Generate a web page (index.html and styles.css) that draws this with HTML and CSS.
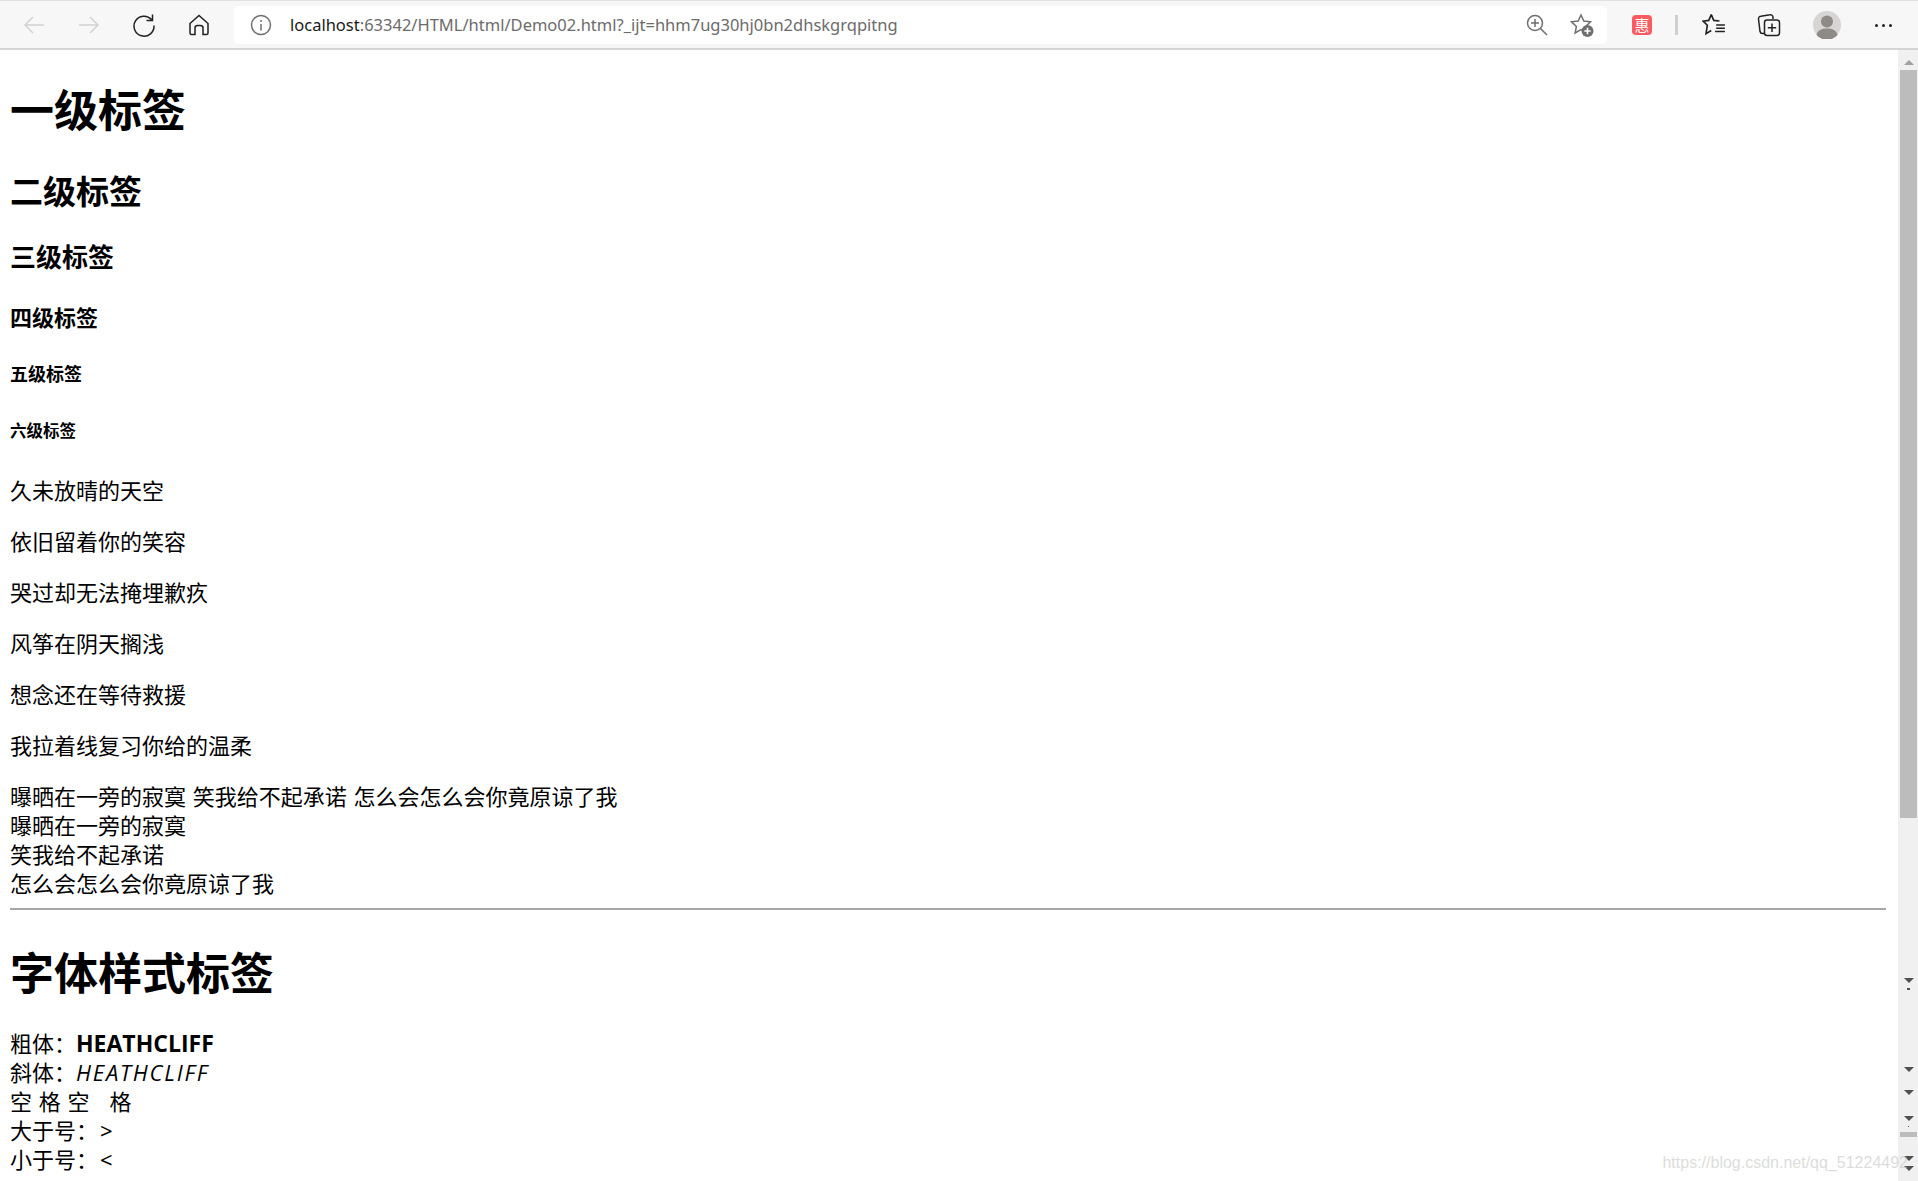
FILE: index.html
```html
<!DOCTYPE html>
<html lang="zh">
<head>
    <meta charset="UTF-8">
    <meta name="viewport" content="width=device-width, initial-scale=1.0">
    <title>Demo02</title>
    <link rel="stylesheet" href="styles.css">
</head>
<body>
    <header class="toolbar">
        <div class="nav-buttons">
            <button class="tool-btn"><svg width="24" height="24" viewBox="0 0 24 24" class="stroke-faint"><path d="M22 12H3M11 4l-8 8 8 8"/></svg></button>
            <button class="tool-btn"><svg width="24" height="24" viewBox="0 0 24 24" class="stroke-faint"><path d="M2 12h19M13 4l8 8-8 8"/></svg></button>
            <button class="tool-btn"><svg width="24" height="24" viewBox="0 0 24 24" class="stroke-dark"><path d="M19.500 6.500A10 10 0 1 0 22 12.500M20.500 1.500v6h-6"/></svg></button>
            <button class="tool-btn"><svg width="24" height="24" viewBox="0 0 24 24" class="stroke-dark"><path d="M3 10.500 12 2.500l9 8V20a1.500 1.500 0 0 1-1.500 1.500H16V15a2.500 2.500 0 0 0-2.500-2.500h-3A2.500 2.500 0 0 0 8 15v6.500H4.500A1.500 1.500 0 0 1 3 20z"/></svg></button>
        </div>
        <div class="address-bar">
            <svg width="22" height="22" viewBox="0 0 22 22" class="stroke-grey info-icon"><circle cx="11" cy="11" r="9.500"/><path d="M11 10v6.500M11 6v2"/></svg>
            <div class="url"><span class="url-host">localhost</span>:63342/HTML/html/Demo02.html?_ijt=hhm7ug30hj0bn2dhskgrqpitng</div>
            <svg width="24" height="24" viewBox="0 0 24 24" class="stroke-grey zoom-icon"><circle cx="10" cy="10" r="7.500"/><path d="M15.500 15.500 22 22M10 6v8M6 10h8"/></svg>
            <svg width="24" height="24" viewBox="0 0 24 24" class="fav-add-icon"><path class="stroke-grey" d="M11 2l2.800 6 6.700.8-4.900 4.600 1.300 6.500L11 16.700 5.100 20l1.300-6.600L1.500 8.800 8.200 8z"/><circle cx="17.500" cy="18" r="6" fill="#6f6f6f"/><path d="M17.500 14.800v6.400M14.300 18h6.400" stroke="#fff" stroke-width="1.600"/></svg>
        </div>
        <div class="ext-badge">惠</div>
        <div class="separator"></div>
        <button class="tool-btn fav-list"><svg width="24" height="24" viewBox="0 0 22 22" class="stroke-dark"><path d="M8.500 1.500l2.300 5.300 5.200.5M8.500 1.500 6.200 6.800 1 7.500l3.900 3.700L3.700 19l4.800-3M13 11h8M13 14h8M12 17h9"/></svg></button>
        <button class="tool-btn"><svg width="24" height="24" viewBox="0 0 24 24" class="stroke-dark"><path d="M7 20.500H5.500A2.500 2.500 0 0 1 3 18.500L1.500 6A2.500 2.500 0 0 1 3.800 3.200L13 1.800A2.500 2.500 0 0 1 16 4v2"/><rect x="7.500" y="7" width="15" height="15.500" rx="2.500"/><path d="M15 10.500v8.500M10.800 14.700h8.400"/></svg></button>
        <div class="avatar">
            <svg width="28" height="28" viewBox="0 0 28 28"><circle cx="14" cy="14" r="14" fill="#d6d5d3"/><circle cx="14" cy="10.500" r="6" fill="#8e8a86"/><path d="M3.500 24c1-5 5.500-6.500 10.500-6.500s9.500 1.500 10.500 6.500a14 14 0 0 1-21 0z" fill="#8e8a86"/></svg>
        </div>
        <div class="more-dots"><span></span><span></span><span></span></div>
    </header>

    <div class="viewport">
        <main class="page">
            <h1>一级标签</h1>
            <h2>二级标签</h2>
            <h3>三级标签</h3>
            <h4>四级标签</h4>
            <h5>五级标签</h5>
            <h6>六级标签</h6>
            <p>久未放晴的天空</p>
            <p>依旧留着你的笑容</p>
            <p>哭过却无法掩埋歉疚</p>
            <p>风筝在阴天搁浅</p>
            <p>想念还在等待救援</p>
            <p>我拉着线复习你给的温柔</p>
            <p class="lyric">曝晒在一旁的寂寞 笑我给不起承诺 怎么会怎么会你竟原谅了我<br>曝晒在一旁的寂寞<br>笑我给不起承诺<br>怎么会怎么会你竟原谅了我</p>
            <hr>
            <h1 class="second-title">字体样式标签</h1>
            <p class="samples">粗体：<strong>HEATHCLIFF</strong><br>斜体：<em>HEATHCLIFF</em><br>空 格 空&nbsp;&nbsp;&nbsp;格<br>大于号：<span class="sym">&gt;</span><br>小于号：<span class="sym">&lt;</span></p>
        </main>

        <!-- screenshot shows a stack of scroll arrows from nested frames -->
        <aside class="scrollbar">
            <div class="arrow-up"></div>
            <div class="thumb"></div>
            <div class="arrow-down arrow-a"></div>
            <div class="speck speck-wide"></div>
            <div class="arrow-down arrow-b"></div>
            <div class="arrow-down arrow-c"></div>
            <div class="arrow-down arrow-d"></div>
            <div class="speck"></div>
            <div class="thumb-small"></div>
            <div class="arrow-down arrow-e"></div>
            <div class="arrow-down arrow-f"></div>
        </aside>
        <div class="watermark">https://blog.csdn.net/qq_51224492</div>
    </div>
</body>
</html>
```

FILE: styles.css
```css
html, body {
    height: 100%;
}
body {
    margin: 0;
    display: flex;
    flex-direction: column;
    overflow: hidden;
    background-color: #fff;
    color: #000;
    font-family: 'Noto Sans', 'Noto Sans CJK SC', sans-serif;
}

/* browser toolbar */
.toolbar {
    flex: none;
    box-sizing: border-box;
    height: 50px;
    display: flex;
    align-items: center;
    padding-top: 1px;
    background-color: #f7f7f7;
    border-top: 1px solid #e2e2e2;
    border-bottom: 2px solid #d4d4d4;
}
.nav-buttons {
    display: flex;
    margin-left: 6px;
}
.tool-btn {
    width: 55px;
    height: 40px;
    padding: 0;
    border: none;
    background: none;
    display: flex;
    align-items: center;
    justify-content: center;
}
.stroke-faint, .stroke-dark, .stroke-grey {
    fill: none;
    stroke-width: 1.500;
}
.stroke-faint { stroke: #d2d2d2; }
.stroke-dark { stroke: #222; }
.stroke-grey {
    fill: none;
    stroke: #6f6f6f;
    stroke-width: 1.500;
}
.address-bar {
    flex: none;
    width: 1373px;
    height: 38px;
    margin-left: 8px;
    display: flex;
    align-items: center;
    background-color: #fff;
    border-radius: 5px;
}
.info-icon {
    margin-left: 16px;
}
.url {
    margin-left: 18px;
    padding-bottom: 2px;
    flex: 1;
    font-size: 16.500px;
    color: #6b6b6b;
    white-space: nowrap;
}
.url-host {
    color: #1a1a1a;
}
.zoom-icon {
    margin-right: 21px;
}
.fav-add-icon {
    margin-right: 13px;
}
.ext-badge {
    width: 20px;
    height: 20px;
    margin-left: 25px;
    border-radius: 4px;
    background-color: #fb5a61;
    color: #fff;
    font-size: 15px;
    line-height: 20px;
    text-align: center;
}
.separator {
    width: 3px;
    height: 20px;
    margin-left: 23px;
    background-color: #cfcfcf;
}
.fav-list {
    margin-left: 8px;
}
.avatar {
    width: 28px;
    height: 28px;
    margin-left: 17px;
}
.more-dots {
    display: flex;
    gap: 4px;
    margin-left: 34px;
}
.more-dots span {
    width: 3px;
    height: 3px;
    border-radius: 50%;
    background-color: #222;
}

/* page content */
.viewport {
    flex: 1;
    min-height: 0;
    display: flex;
    position: relative;
}
.page {
    flex: 1;
    min-width: 0;
    padding: 0 12px 0 10px;
    overflow: hidden;
}
h1 {
    font-size: 44px;
    line-height: 58px;
    margin: 31px 0;
}
h2 {
    font-size: 33px;
    line-height: 44px;
    margin: 27px 0 26px;
}
h3 {
    font-size: 26px;
    line-height: 34px;
    margin: 25px 0;
}
h4 {
    font-size: 22px;
    line-height: 29px;
    margin: 29px 0;
}
h5 {
    font-size: 18px;
    line-height: 24px;
    margin: 30px 0;
}
h6 {
    font-size: 16.500px;
    line-height: 22px;
    margin: 34px 0;
}
p {
    font-size: 22px;
    line-height: 29px;
    margin: 22px 0;
    word-spacing: 1px;
}
.lyric {
    margin-bottom: 10px;
}
hr {
    margin: 10px 0;
    border: none;
    border-top: 2px solid #a6a6a6;
}
.second-title {
    margin: 34px 0 27px;
}
.samples strong {
    font-family: 'Open Sans', sans-serif;
    font-size: 23px;
}
.samples em {
    font-family: 'Open Sans', sans-serif;
    letter-spacing: 1.800px;
}
.sym {
    margin-left: 2px;
}

/* scrollbar */
.scrollbar {
    flex: none;
    width: 20px;
    position: relative;
    background-color: #f0f0f0;
}
.thumb {
    margin: 20px 1px 0 2px;
    height: 748px;
    background-color: #bcbcbc;
}
.arrow-up, .arrow-down {
    position: absolute;
    left: 6px;
    width: 0;
    height: 0;
    border-left: 5px solid transparent;
    border-right: 5px solid transparent;
}
.arrow-up {
    top: 10px;
    border-bottom: 5px solid #a0a0a0;
}
.arrow-down {
    border-top: 5px solid #505050;
}
.arrow-a { top: 928px; }
.arrow-b { top: 1017px; }
.arrow-c { top: 1040px; }
.arrow-d { top: 1066px; }
.arrow-e { top: 1106px; }
.arrow-f { top: 1116px; }
.speck {
    position: absolute;
    top: 1076px;
    left: 10px;
    width: 1px;
    height: 1px;
    background-color: #505050;
}
.speck-wide {
    top: 938px;
    left: 9px;
    width: 3px;
    height: 2px;
}
.thumb-small {
    position: absolute;
    top: 1082px;
    left: 2px;
    width: 17px;
    height: 5px;
    background-color: #bcbcbc;
}
.watermark {
    position: absolute;
    right: 10px;
    bottom: 9px;
    font-family: 'Liberation Sans', sans-serif;
    font-size: 16px;
    color: rgba(190, 190, 190, 0.55);
    white-space: nowrap;
}
```
